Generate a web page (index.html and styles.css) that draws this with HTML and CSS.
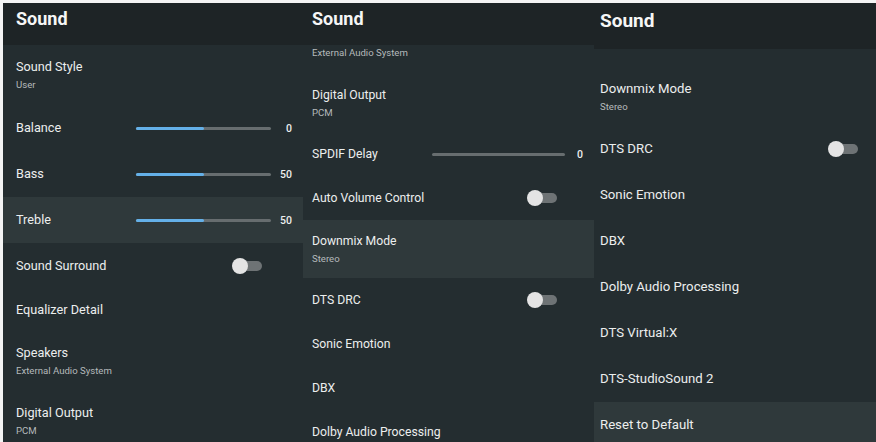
FILE: index.html
```html
<!DOCTYPE html>
<html lang="en">
<head>
  <meta charset="UTF-8" />
  <meta name="viewport" content="width=device-width, initial-scale=1.0" />
  <title>Sound settings</title>
  <link rel="stylesheet" href="styles.css">
</head>
<body>
  <div class="screens">

    <!-- first page: top of the list -->
    <section class="panel p1">
      <header>Sound</header>
      <div class="view">
        <div class="list">
          <div class="row two"><span class="title">Sound Style</span><span class="sub">User</span></div>
          <div class="row">
            <span class="title">Balance</span>
            <span class="slider"><span class="track"><span class="fill" style="width: 50%"></span></span><span class="val">0</span></span>
          </div>
          <div class="row">
            <span class="title">Bass</span>
            <span class="slider"><span class="track"><span class="fill" style="width: 50%"></span></span><span class="val">50</span></span>
          </div>
          <div class="row focus">
            <span class="title">Treble</span>
            <span class="slider"><span class="track"><span class="fill" style="width: 50%"></span></span><span class="val">50</span></span>
          </div>
          <div class="row">
            <span class="title">Sound Surround</span>
            <span class="toggle"><span class="knob"></span></span>
          </div>
          <div class="row short"><span class="title">Equalizer Detail</span></div>
          <div class="row two"><span class="title">Speakers</span><span class="sub">External Audio System</span></div>
          <div class="row two"><span class="title">Digital Output</span><span class="sub">PCM</span></div>
        </div>
      </div>
    </section>

    <!-- second page: scrolled to the middle, Speakers half under the header -->
    <section class="panel p2">
      <header>Sound</header>
      <div class="view">
        <div class="list">
          <div class="row peek"><span class="sub">External Audio System</span></div>
          <div class="row two"><span class="title">Digital Output</span><span class="sub">PCM</span></div>
          <div class="row">
            <span class="title">SPDIF Delay</span>
            <span class="slider"><span class="track"><span class="fill" style="width: 0%"></span></span><span class="val">0</span></span>
          </div>
          <div class="row">
            <span class="title">Auto Volume Control</span>
            <span class="toggle"><span class="knob"></span></span>
          </div>
          <div class="row two focus"><span class="title">Downmix Mode</span><span class="sub">Stereo</span></div>
          <div class="row">
            <span class="title">DTS DRC</span>
            <span class="toggle"><span class="knob"></span></span>
          </div>
          <div class="row"><span class="title">Sonic Emotion</span></div>
          <div class="row"><span class="title">DBX</span></div>
          <div class="row"><span class="title">Dolby Audio Processing</span></div>
        </div>
      </div>
    </section>

    <!-- third page: bottom of the list -->
    <section class="panel p3">
      <header>Sound</header>
      <div class="view">
        <div class="list">
          <div class="row two"><span class="title">Downmix Mode</span><span class="sub">Stereo</span></div>
          <div class="row">
            <span class="title">DTS DRC</span>
            <span class="toggle"><span class="knob"></span></span>
          </div>
          <div class="row"><span class="title">Sonic Emotion</span></div>
          <div class="row"><span class="title">DBX</span></div>
          <div class="row"><span class="title">Dolby Audio Processing</span></div>
          <div class="row"><span class="title">DTS Virtual:X</span></div>
          <div class="row"><span class="title">DTS-StudioSound 2</span></div>
          <div class="row focus"><span class="title">Reset to Default</span></div>
        </div>
      </div>
    </section>

  </div>
</body>
</html>
```

FILE: styles.css
```css
body {
  margin: 0;
  background: #f4f4f4;
  font-family: Roboto, "Liberation Sans", sans-serif;
  color: #eceeee;
  overflow: hidden;
}
.screens {
  display: flex;
  height: 442px;
  padding: 3px 0 0 3px;
  box-sizing: border-box;
}
.panel {
  display: flex;
  flex-direction: column;
  background: #242d30;
  overflow: hidden;
  --row: 46px;
  --row2: 60px;
  --pad-l: 13px;
  --toggle-r: 30px;
  --fs: 12.7px;
}
.p1 { width: 300px; }
.p2 {
  width: 291px;
  --row: 44px;
  --row2: 58px;
  --pad-l: 9px;
  --toggle-r: 26px;
  --fs: 12.2px;
}
.p3 {
  width: 282px;
  --row2: 59px;
  --pad-l: 6px;
  --toggle-r: 7px;
  --fs: 13.2px;
}
header {
  height: 42px;
  flex: none;
  box-sizing: border-box;
  padding: 5px 0 0 var(--pad-l);
  background: #1e2426;
  font-size: 18px;
  font-weight: 700;
  line-height: 22px;
  color: #f6f6f6;
}
.p3 header {
  height: 46px;
  padding-top: 7px;
  font-size: 19px;
}
.view {
  flex: 1;
  overflow: hidden;
}
.p3 .list { padding-top: 18px; }

.row {
  height: var(--row);
  display: flex;
  align-items: center;
  justify-content: space-between;
  padding: 0 11px 0 var(--pad-l);
  box-sizing: border-box;
}
.row.short { height: 42px; }
.row.two {
  height: var(--row2);
  flex-direction: column;
  align-items: flex-start;
  justify-content: center;
  gap: 4px;
}
.row.peek {
  height: 29px;
  align-items: flex-start;
  padding-top: 2px;
}
.row.focus {
  background: #2f393b;
}
.title {
  font-size: var(--fs);
  line-height: 16px;
}
.sub {
  font-size: 9.6px;
  line-height: 12px;
  color: #b5babb;
}

/* slider: track plus value */
.slider {
  display: flex;
  align-items: center;
}
.track {
  width: 135px;
  height: 3px;
  border-radius: 2px;
  background: #676d6f;
  display: flex;
}
.p2 .track { width: 133px; }
.fill {
  height: 100%;
  border-radius: 2px;
  background: #64b0e8;
}
.val {
  width: 21px;
  text-align: right;
  font-size: 10.5px;
  font-weight: 500;
}
.p2 .val { width: 18px; }

/* switch, off state */
.toggle {
  position: relative;
  width: 30px;
  height: 16px;
  margin-right: var(--toggle-r);
}
.toggle::before {
  content: "";
  position: absolute;
  right: 0;
  top: 3px;
  width: 22px;
  height: 10px;
  border-radius: 5px;
  background: #6e7375;
}
.knob {
  position: absolute;
  left: 0;
  top: 0;
  width: 16px;
  height: 16px;
  border-radius: 50%;
  background: #e4e4e4;
}
```
